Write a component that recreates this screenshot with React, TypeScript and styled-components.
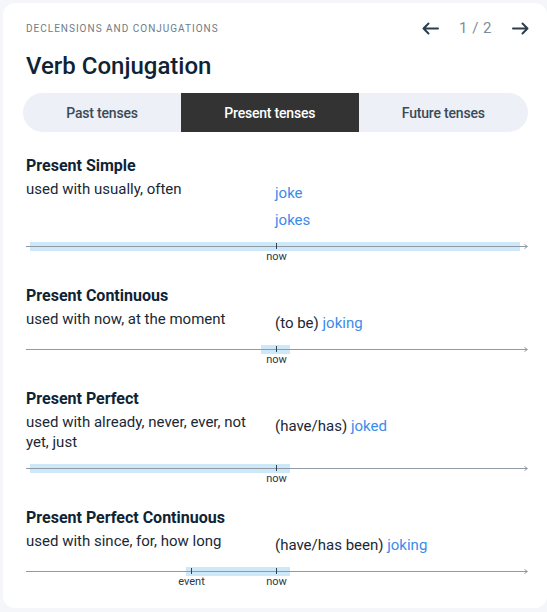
import styled, { createGlobalStyle } from 'styled-components';

const GlobalStyle = createGlobalStyle`
	html, body {
		margin: 0;
		padding: 0;
		background: #f4f6f9;
		overflow: hidden;
	}
	body {
		font-family: Roboto, 'Noto Sans', sans-serif;
	}
`;

const Card = styled.div`
	width: 544px;
	box-sizing: border-box;
	margin: 3px 0 4px 3px;
	background: #fff;
	border-radius: 12px;
	padding: 15px 19px 20px 20px;
`;

const Header = styled.div`
	display: flex;
	align-items: center;
	justify-content: space-between;
	height: 20px;
	padding-left: 3px;
`;

const Eyebrow = styled.div`
	font-size: 10px;
	letter-spacing: 1px;
	text-transform: uppercase;
	color: #6f7b87;
`;

const Pager = styled.div`
	display: flex;
	align-items: center;
	gap: 20px;
	margin-right: -1px;
`;

const PageCount = styled.span`
	font-size: 15px;
	color: #7f8b97;
	letter-spacing: 0.5px;
`;

const ArrowButton = styled.button`
	border: 0;
	background: none;
	padding: 0;
	display: flex;
	cursor: pointer;
	color: #2c3e4d;
`;

const Title = styled.h1`
	margin: 14px 0 0;
	padding-left: 3px;
	font-size: 24px;
	line-height: 28px;
	font-weight: 500;
	color: #0e2435;
`;

const Tabs = styled.div`
	display: flex;
	margin-top: 13px;
	height: 39px;
	background: #edf0f6;
	border-radius: 20px;
	overflow: hidden;
`;

const Tab = styled.button<{ $active?: boolean }>`
	flex: 1 1 auto;
	border: 0;
	padding: 0;
	font-family: inherit;
	font-size: 14px;
	font-weight: 500;
	letter-spacing: -0.2px;
	cursor: pointer;
	background: ${(p) => (p.$active ? '#333333' : 'transparent')};
	color: ${(p) => (p.$active ? '#ffffff' : '#3a4a5a')};
`;

const Section = styled.section<{ $first?: boolean }>`
	margin-top: ${(p) => (p.$first ? '24px' : '23px')};
	padding: 0 1px 0 3px;
`;

const TenseName = styled.h2`
	margin: 0;
	font-size: 16px;
	line-height: 20px;
	font-weight: 700;
	color: #0e2435;
`;

const Row = styled.div`
	display: grid;
	grid-template-columns: 240px 1fr;
	column-gap: 9px;
	margin-top: 3px;
	margin-bottom: 10px;
`;

const Usage = styled.div`
	font-size: 15px;
	line-height: 20px;
	color: #1a2835;
`;

const Forms = styled.div`
	display: flex;
	flex-direction: column;
	gap: 7px;
	margin-top: 4px;
`;

const Form = styled.div`
	font-size: 15px;
	line-height: 20px;
	color: #1a2835;
`;

const Verb = styled.span`
	color: #3b8bea;
`;

const Timeline = styled.div`
	position: relative;
	height: 23px;
`;

const Band = styled.div`
	position: absolute;
	top: 2px;
	height: 9px;
	background: #cde8f9;
`;

const Axis = styled.div`
	position: absolute;
	left: 0;
	right: 0;
	top: 6px;
	height: 1px;
	background: #8f9aa5;
`;

const AxisHead = styled.svg`
	position: absolute;
	right: -1px;
	top: 4px;
`;

const Tick = styled.div`
	position: absolute;
	top: 3px;
	width: 1px;
	height: 6px;
	background: #2f4050;
`;

const TickLabel = styled.div`
	position: absolute;
	top: 11px;
	transform: translateX(-50%);
	font-size: 11px;
	line-height: 12px;
	color: #2b3846;
`;

type Mark = { at: number; label: string };

type Tense = {
	name: string;
	usage: string;
	forms: { aux?: string; verb: string }[];
	band: [number, number];
	marks: Mark[];
};

const NOW = 250;

const tenses: Tense[] = [
	{
		name: 'Present Simple',
		usage: 'used with usually, often',
		forms: [{ verb: 'joke' }, { verb: 'jokes' }],
		band: [4, 494],
		marks: [{ at: NOW, label: 'now' }],
	},
	{
		name: 'Present Continuous',
		usage: 'used with now, at the moment',
		forms: [{ aux: '(to be)', verb: 'joking' }],
		band: [235, 264],
		marks: [{ at: NOW, label: 'now' }],
	},
	{
		name: 'Present Perfect',
		usage: 'used with already, never, ever, not yet, just',
		forms: [{ aux: '(have/has)', verb: 'joked' }],
		band: [4, 264],
		marks: [{ at: NOW, label: 'now' }],
	},
	{
		name: 'Present Perfect Continuous',
		usage: 'used with since, for, how long',
		forms: [{ aux: '(have/has been)', verb: 'joking' }],
		band: [160, 264],
		marks: [
			{ at: 165, label: 'event' },
			{ at: NOW, label: 'now' },
		],
	},
];

function Arrow({ dir }: { dir: 'left' | 'right' }) {
	return (
		<svg
			width='17'
			height='13'
			viewBox='0 0 17 13'
			fill='none'
			stroke='currentColor'
			strokeWidth='2'
			strokeLinecap='round'
			strokeLinejoin='round'
			style={{ transform: dir === 'right' ? 'scaleX(-1)' : undefined }}
		>
			<path d='M16 6.5H1.5M6.5 1.5L1.5 6.5L6.5 11.5' />
		</svg>
	);
}

function TimeAxis({ band, marks }: Pick<Tense, 'band' | 'marks'>) {
	return (
		<Timeline>
			<Band style={{ left: band[0], width: band[1] - band[0] }} />
			<Axis />
			<AxisHead width='4' height='5' viewBox='0 0 4 5'>
				<path d='M0.5 0.5L3.5 2.5L0.5 4.5' fill='none' stroke='#8f9aa5' strokeWidth='1' />
			</AxisHead>
			{marks.map((m) => (
				<Tick key={m.label} style={{ left: m.at }} />
			))}
			{marks.map((m) => (
				<TickLabel key={m.label} style={{ left: m.at + 0.5 }}>
					{m.label}
				</TickLabel>
			))}
		</Timeline>
	);
}

export default function App() {
	return (
		<>
			<GlobalStyle />
			<Card>
				<Header>
					<Eyebrow>Declensions and conjugations</Eyebrow>
					<Pager>
						<ArrowButton aria-label='previous'>
							<Arrow dir='left' />
						</ArrowButton>
						<PageCount>1 / 2</PageCount>
						<ArrowButton aria-label='next'>
							<Arrow dir='right' />
						</ArrowButton>
					</Pager>
				</Header>
				<Title>Verb Conjugation</Title>
				<Tabs>
					<Tab>Past tenses</Tab>
					<Tab $active>Present tenses</Tab>
					<Tab>Future tenses</Tab>
				</Tabs>
				{tenses.map((t, i) => (
					<Section key={t.name} $first={i === 0}>
						<TenseName>{t.name}</TenseName>
						<Row>
							<Usage>{t.usage}</Usage>
							<Forms>
								{t.forms.map((f) => (
									<Form key={f.verb}>
										{f.aux && <>{f.aux} </>}
										<Verb>{f.verb}</Verb>
									</Form>
								))}
							</Forms>
						</Row>
						<TimeAxis band={t.band} marks={t.marks} />
					</Section>
				))}
			</Card>
		</>
	);
}
